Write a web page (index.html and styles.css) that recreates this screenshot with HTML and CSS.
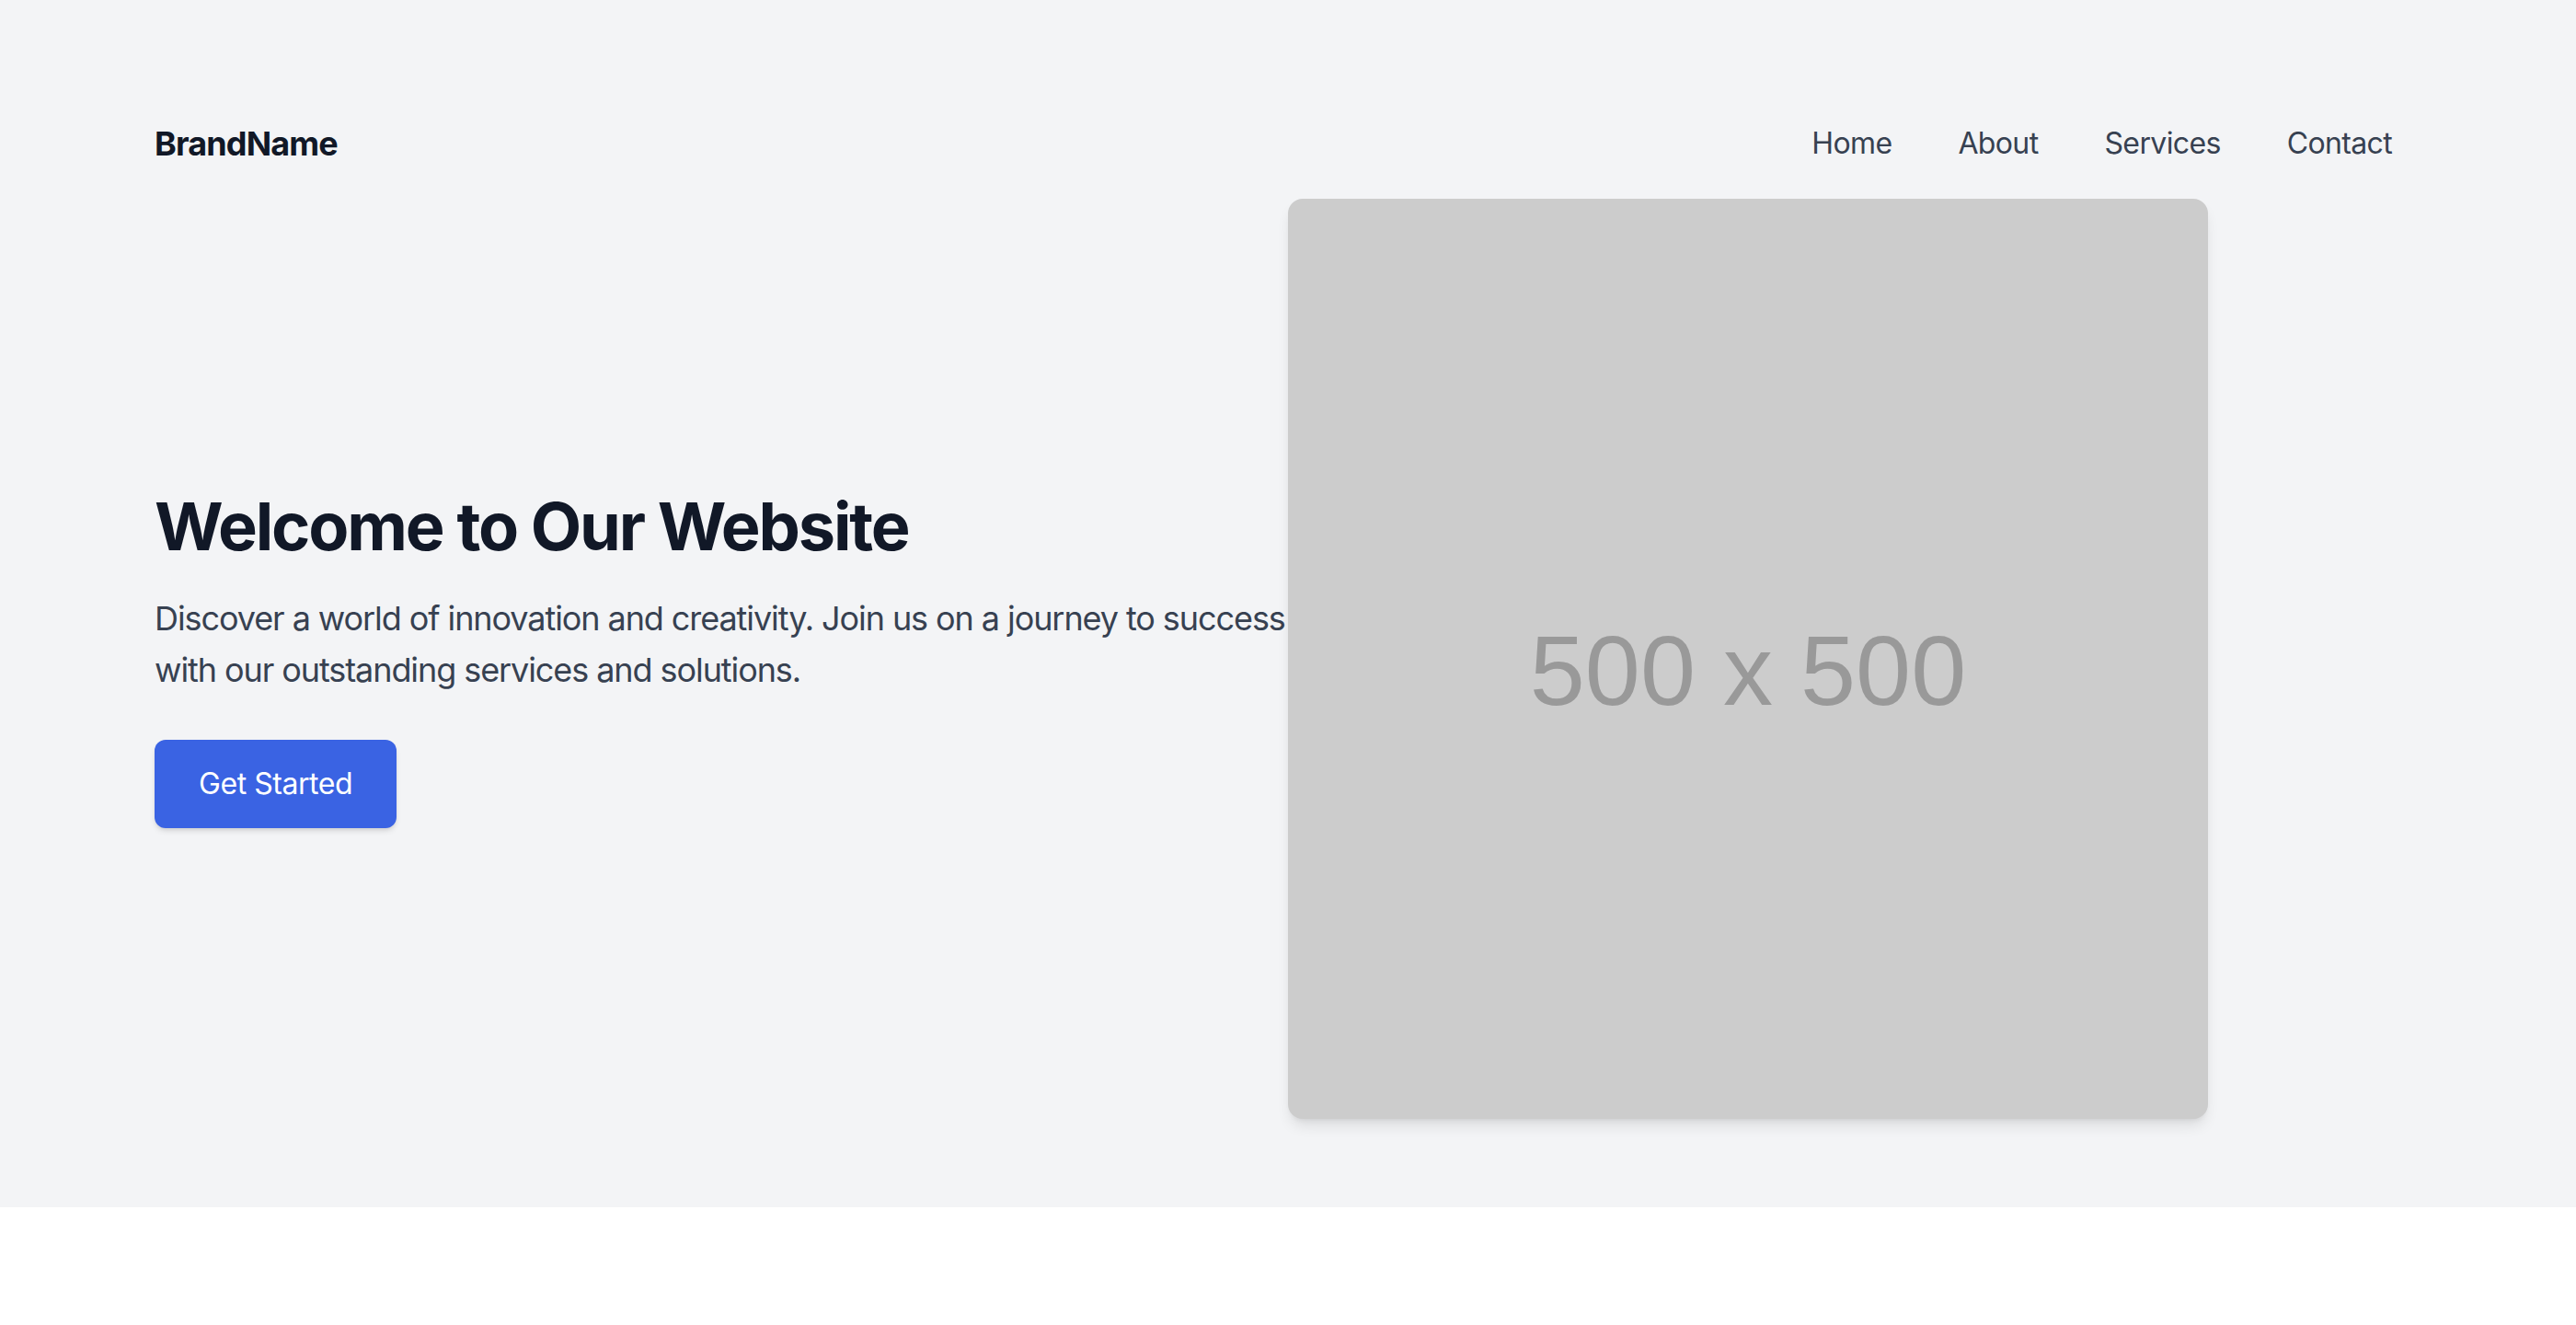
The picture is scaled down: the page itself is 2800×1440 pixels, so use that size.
FILE: index.html
```html
<!DOCTYPE html>
<html lang="en">
<head>
<meta charset="utf-8">
<title>BrandName</title>
<link rel="stylesheet" href="styles.css">
</head>
<body>
<section class="hero-section">
  <div class="container">
    <nav class="navbar">
      <div class="brand">BrandName</div>
      <ul class="nav-links">
        <li><a href="#">Home</a></li>
        <li><a href="#">About</a></li>
        <li><a href="#">Services</a></li>
        <li><a href="#">Contact</a></li>
      </ul>
    </nav>
    <div class="hero">
      <div class="hero-text">
        <h1 class="hero-title">Welcome to Our Website</h1>
        <p class="hero-desc">Discover a world of innovation and creativity. Join us on a journey to success with our outstanding services and solutions.</p>
        <a href="#" class="btn">Get Started</a>
      </div>
      <div class="hero-media">
        <div class="placeholder"><span>500 x 500</span></div>
      </div>
    </div>
  </div>
</section>
</body>
</html>
```
FILE: styles.css
```css
* { box-sizing: border-box; }
html, body { margin: 0; padding: 0; background: #ffffff; }
body { font-family: Inter, "Noto Sans", sans-serif; letter-spacing: -0.02em; }

.hero-section {
  background: #f3f4f6;
  padding: 128px 0 96px;
}
.container {
  width: 2464px;
  margin: 0 auto;
}
.navbar {
  display: flex;
  justify-content: space-between;
  align-items: center;
  height: 56px;
}
.brand {
  font-size: 36px;
  font-weight: 700;
  color: #111827;
  line-height: 56px;
  letter-spacing: -0.024em;
}
.nav-links {
  list-style: none;
  margin: 0;
  padding: 0;
  display: flex;
  gap: 8px;
}
.nav-links a {
  display: block;
  padding: 0 32px;
  font-size: 32px;
  line-height: 48px;
  color: #374151;
  text-decoration: none;
  letter-spacing: -0.02em;
}
.hero {
  display: flex;
  align-items: center;
  margin-top: 32px;
}
.hero-text, .hero-media {
  width: 50%;
}
.hero-title {
  margin: 0 0 32px;
  font-size: 72px;
  line-height: 80px;
  font-weight: 700;
  color: #111827;
  letter-spacing: -0.03em;
}
.hero-desc {
  margin: 0 0 48px;
  font-size: 36px;
  line-height: 56px;
  color: #374151;
  letter-spacing: -0.03em;
}
.btn {
  display: inline-block;
  background: #3a63e3;
  color: #ffffff;
  text-decoration: none;
  font-size: 32px;
  line-height: 48px;
  padding: 24px 48px;
  border-radius: 12px;
  letter-spacing: -0.014em;
  box-shadow: 0 4px 6px -1px rgba(0,0,0,0.12), 0 2px 4px -2px rgba(0,0,0,0.1);
}
.placeholder {
  width: 1000px;
  height: 1000px;
  background: #cccccc;
  border-radius: 16px;
  box-shadow: 0 10px 15px -3px rgba(0,0,0,0.1), 0 4px 6px -4px rgba(0,0,0,0.1);
  display: flex;
  align-items: center;
  justify-content: center;
  padding-top: 24px;
}
.placeholder span {
  font-family: "Liberation Sans", Arial, sans-serif;
  font-size: 108px;
  color: #999999;
  letter-spacing: 0;
}
```
